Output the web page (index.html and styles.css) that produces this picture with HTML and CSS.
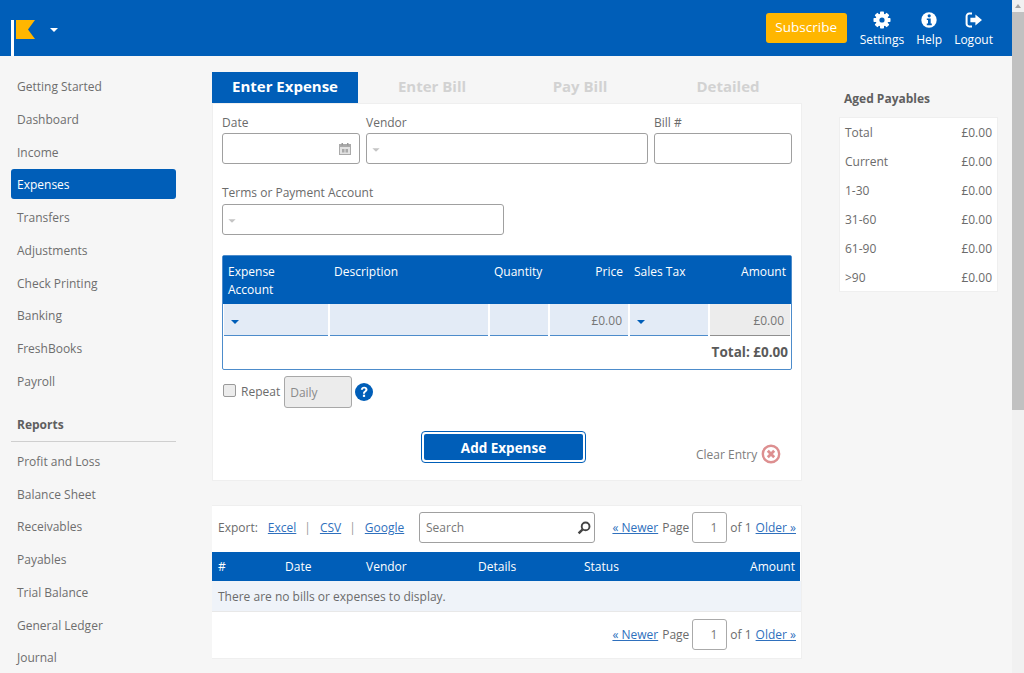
FILE: index.html
```html
<!DOCTYPE html>
<html lang="en">
<head>
<meta charset="utf-8">
<title>Expenses</title>
<link rel="stylesheet" href="styles.css">
</head>
<body>
<div class="shell">
  <div class="page">
    <header class="topbar">
      <div class="brand">
        <svg class="logo" width="26" height="36" viewBox="0 0 26 36"><rect x="0" y="0" width="3" height="36" fill="#fff"/><polygon points="5,0 24,0 17,9.5 24,19 5,19" fill="#ffb600"/></svg>
        <span class="caret caret-white"></span>
      </div>
      <div class="actions">
        <a class="subscribe">Subscribe</a>
        <nav class="topnav">
          <a class="topnav-item">
            <svg width="18" height="18" viewBox="0 0 18 18"><g fill="#fff"><rect x="7" y="0.5" width="4" height="17" rx="0.8"/><rect x="7" y="0.5" width="4" height="17" rx="0.8" transform="rotate(45 9 9)"/><rect x="7" y="0.5" width="4" height="17" rx="0.8" transform="rotate(90 9 9)"/><rect x="7" y="0.5" width="4" height="17" rx="0.8" transform="rotate(135 9 9)"/></g><circle cx="9" cy="9" r="5.2" fill="none" stroke="#fff" stroke-width="2.4"/><circle cx="9" cy="9" r="2.6" fill="#005eb8"/></svg>
            <span>Settings</span>
          </a>
          <a class="topnav-item">
            <svg width="18" height="18" viewBox="0 0 18 18"><circle cx="9" cy="9" r="7.7" fill="#fff"/><circle cx="9.2" cy="4.8" r="1.6" fill="#005eb8"/><path d="M6.8 7.4h3.9v5.2h1.1v1.7H6.8v-1.7h1.2V9.1H6.8z" fill="#005eb8"/></svg>
            <span>Help</span>
          </a>
          <a class="topnav-item">
            <svg width="18" height="18" viewBox="0 0 18 18"><path d="M7 2.6H4.2A2.6 2.6 0 0 0 1.6 5.2v7.6a2.6 2.6 0 0 0 2.6 2.6H7" fill="none" stroke="#fff" stroke-width="2"/><path d="M10.4 3.4 17 9l-6.6 5.6v-3.4H5.4V6.8h5z" fill="#fff"/></svg>
            <span>Logout</span>
          </a>
        </nav>
      </div>
    </header>

    <div class="layout">
      <aside class="sidebar">
        <a class="side-link">Getting Started</a>
        <a class="side-link">Dashboard</a>
        <a class="side-link">Income</a>
        <a class="side-link active">Expenses</a>
        <a class="side-link">Transfers</a>
        <a class="side-link">Adjustments</a>
        <a class="side-link">Check Printing</a>
        <a class="side-link">Banking</a>
        <a class="side-link">FreshBooks</a>
        <a class="side-link">Payroll</a>
        <h3 class="side-heading">Reports</h3>
        <a class="side-link">Profit and Loss</a>
        <a class="side-link">Balance Sheet</a>
        <a class="side-link">Receivables</a>
        <a class="side-link">Payables</a>
        <a class="side-link">Trial Balance</a>
        <a class="side-link">General Ledger</a>
        <a class="side-link">Journal</a>
      </aside>

      <main class="content">
        <div class="tabs">
          <a class="tab active">Enter Expense</a>
          <a class="tab">Enter Bill</a>
          <a class="tab">Pay Bill</a>
          <a class="tab">Detailed</a>
        </div>

        <section class="card form-card">
          <div class="field-row">
            <label class="field field-date">
              <span class="field-label">Date</span>
              <span class="input">
                <svg class="cal" width="12" height="12" viewBox="0 0 12 12"><rect x="0.5" y="1.5" width="11" height="10" fill="#e2e2e2" stroke="#aaa"/><rect x="0.5" y="1.5" width="11" height="2.5" fill="#aaa"/><rect x="2.5" y="0" width="1.5" height="2.5" fill="#999"/><rect x="8" y="0" width="1.5" height="2.5" fill="#999"/><rect x="3" y="6" width="2.5" height="3.5" fill="#aaa"/><rect x="6.5" y="6" width="2.5" height="3.5" fill="#aaa"/></svg>
              </span>
            </label>
            <label class="field field-vendor">
              <span class="field-label">Vendor</span>
              <span class="input input-select"><span class="caret caret-grey"></span></span>
            </label>
            <label class="field field-bill">
              <span class="field-label">Bill #</span>
              <span class="input"></span>
            </label>
          </div>

          <label class="field field-terms">
            <span class="field-label">Terms or Payment Account</span>
            <span class="input input-select"><span class="caret caret-grey"></span></span>
          </label>

          <div class="lines">
            <div class="lines-head">
              <div class="lh">Expense<br>Account</div>
              <div class="lh">Description</div>
              <div class="lh">Quantity</div>
              <div class="lh right lh-price">Price</div>
              <div class="lh">Sales Tax</div>
              <div class="lh right">Amount</div>
            </div>
            <div class="lines-row">
              <div class="lc"><span class="caret caret-blue"></span></div>
              <div class="lc"></div>
              <div class="lc"></div>
              <div class="lc right">£0.00</div>
              <div class="lc"><span class="caret caret-blue"></span></div>
              <div class="lc right readonly">£0.00</div>
            </div>
            <div class="lines-total">Total: £0.00</div>
          </div>

          <div class="repeat-row">
            <span class="check"></span>
            <span class="repeat-label">Repeat</span>
            <span class="input repeat-input">Daily</span>
            <svg class="help" width="18" height="18" viewBox="0 0 18 18"><circle cx="9" cy="9" r="9" fill="#005eb8"/><path d="M5.8 6.8C6 4.9 7.4 3.8 9.2 3.8c1.9 0 3.3 1.2 3.3 2.8 0 1.3-.7 2-1.7 2.6-.7.4-.9.7-.9 1.5H8c0-1.5.4-2.1 1.4-2.8.7-.4 1-.8 1-1.3 0-.6-.5-1-1.2-1-.8 0-1.2.5-1.3 1.2z" fill="#fff"/><rect x="7.9" y="11.7" width="2.2" height="2.2" fill="#fff"/></svg>
          </div>

          <div class="submit-row">
            <button class="add-btn" type="button"><span>Add Expense</span></button>
            <a class="clear">
              <span>Clear Entry</span>
              <svg width="20" height="20" viewBox="0 0 20 20"><circle cx="10" cy="10" r="8.2" fill="#fff" stroke="#dd8f90" stroke-width="2.4"/><path d="M6.8 6.8l6.4 6.4M13.2 6.8l-6.4 6.4" stroke="#dd8f90" stroke-width="2.8"/></svg>
            </a>
          </div>
        </section>

        <section class="card list-card">
          <div class="toolbar">
            <div class="export">
              <span class="export-label">Export:</span>
              <a class="link">Excel</a><span class="sep">|</span>
              <a class="link">CSV</a><span class="sep">|</span>
              <a class="link">Google</a>
            </div>
            <div class="input search">
              <span>Search</span>
              <svg width="14" height="14" viewBox="0 0 14 14"><circle cx="8.6" cy="5.4" r="3.9" fill="none" stroke="#444" stroke-width="1.9"/><path d="M5.7 8.3 1.6 12.4" stroke="#444" stroke-width="2.4"/></svg>
            </div>
            <div class="pager">
              <a class="link">« Newer</a><span>Page</span><span class="input page-input">1</span><span>of 1</span><a class="link">Older »</a>
            </div>
          </div>
          <div class="list-head">
            <span>#</span><span>Date</span><span>Vendor</span><span>Details</span><span>Status</span><span class="right">Amount</span>
          </div>
          <div class="list-empty">There are no bills or expenses to display.</div>
          <div class="list-foot">
            <div class="pager">
              <a class="link">« Newer</a><span>Page</span><span class="input page-input">1</span><span>of 1</span><a class="link">Older »</a>
            </div>
          </div>
        </section>
      </main>

      <aside class="aged">
        <h3 class="aged-title">Aged Payables</h3>
        <div class="aged-card">
          <div class="aged-row"><span>Total</span><span>£0.00</span></div>
          <div class="aged-row"><span>Current</span><span>£0.00</span></div>
          <div class="aged-row"><span>1-30</span><span>£0.00</span></div>
          <div class="aged-row"><span>31-60</span><span>£0.00</span></div>
          <div class="aged-row"><span>61-90</span><span>£0.00</span></div>
          <div class="aged-row"><span>&gt;90</span><span>£0.00</span></div>
        </div>
      </aside>
    </div>
  </div>

  <div class="scrollbar">
    <div class="scroll-arrow"></div>
    <div class="scroll-thumb"></div>
  </div>
</div>
</body>
</html>
```
FILE: styles.css
```css
* { box-sizing: border-box; }
html, body { margin: 0; height: 100%; overflow: hidden; }
body {
  font-family: "Open Sans", "Liberation Sans", sans-serif;
  font-size: 12px;
  color: #6b6b6b;
  background: #f6f6f6;
}
.shell { display: flex; height: 673px; }
.page { flex: 1; min-width: 0; height: 673px; overflow: hidden; }

.topbar {
  height: 56px;
  background: #005eb8;
  display: flex;
  justify-content: space-between;
  align-items: flex-start;
  padding: 0 19px 0 11px;
}
.brand { display: flex; align-items: flex-start; padding-top: 20px; }
.logo { display: block; }
.brand .caret { margin: 8px 0 0 13px; }
.caret {
  display: inline-block;
  width: 0; height: 0;
  border-left: 4px solid transparent;
  border-right: 4px solid transparent;
  border-top: 4px solid #fff;
}
.caret-grey { border-top-color: #c4c4c4; }
.caret-blue { border-top-color: #005eb8; }
.actions { display: flex; align-items: flex-start; }
.subscribe {
  margin-top: 13px;
  width: 81px;
  height: 30px;
  background: #ffb600;
  border-radius: 3px;
  color: #fff;
  font-size: 13.5px;
  line-height: 28px;
  text-align: center;
}
.topnav { display: flex; gap: 12px; margin-left: 13px; padding-top: 11px; }
.topnav-item {
  display: flex;
  flex-direction: column;
  align-items: center;
  gap: 1px;
  color: #fff;
  font-size: 12px;
  line-height: 19px;
}
.topnav-item svg { display: block; }

.layout { display: flex; padding-top: 16px; align-items: flex-start; }
.sidebar { width: 165px; margin: -1px 0 0 11px; flex: none; }
.side-link {
  display: block;
  height: 30px;
  margin-bottom: 2.75px;
  padding: 1px 0 0 6px;
  line-height: 29px;
  border-radius: 3px;
  color: #6e6e6e;
}
.side-link.active { background: #005eb8; color: #fff; }
.side-heading {
  margin: 12.5px 0 4px;
  height: 33.5px;
  padding: 2px 0 0 6px;
  font-size: 12px;
  font-weight: 700;
  line-height: 30px;
  color: #5f5f5f;
  border-bottom: 1px solid #cfcfcf;
}

.content { width: 590px; margin-left: 36px; flex: none; }
.tabs { display: grid; grid-template-columns: 146px 148px 148px 148px; height: 31px; }
.tab {
  text-align: center;
  font-size: 15px;
  font-weight: 700;
  line-height: 29px;
  color: #d2d2d2;
}
.tab.active { background: #005eb8; color: #fff; }

.card { background: #fff; border: 1px solid #efefef; }
.form-card { height: 378px; padding: 8px 9px 0 9px; }
.field-row { display: flex; gap: 6px; }
.field { display: block; }
.field-date { width: 138px; }
.field-vendor { width: 282px; }
.field-bill { width: 138px; }
.field-terms { width: 282px; margin-top: 18px; }
.field-label { display: block; height: 21px; line-height: 21px; font-size: 12px; }
.field-terms .field-label { height: 22px; }
.input {
  display: flex;
  align-items: center;
  height: 31px;
  background: #fff;
  border: 1px solid #a0a0a0;
  border-radius: 3px;
}
.field-date .input { justify-content: flex-end; padding-right: 8px; }
.input-select { padding-left: 5px; }
.input .caret { transform: scale(0.9); margin-top: 3px; }

.lines {
  margin-top: 20px;
  width: 570px;
  height: 115px;
  border: 1px solid #4d8ccb;
  border-radius: 2px;
}
.lines-head, .lines-row {
  display: grid;
  grid-template-columns: 106px 160px 60px 80px 80px 82px;
}
.lines-head { height: 48px; background: #005eb8; color: #fff; }
.lh { padding: 7px 5px 0; line-height: 18px; }
.lh-price { padding-right: 6px; }
.right { text-align: right; }
.lines-row { height: 32px; }
.lc {
  margin: 0 1px;
  height: 32px;
  background: #e3ebf6;
  border-bottom: 1px solid #4d8ccb;
  line-height: 33px;
  padding: 0 5px;
  color: #777;
}
.lc .caret { margin-left: 2px; vertical-align: middle; }
.lc.readonly { background: #ececec; border-bottom-color: #8f8f8f; }
.lc.right { padding-right: 6px; }
.lines-total {
  height: 33px;
  line-height: 33px;
  text-align: right;
  padding-right: 3px;
  font-weight: 700;
  font-size: 13.5px;
  color: #5a5a5a;
}

.repeat-row { display: flex; align-items: center; height: 32px; margin-top: 6px; }
.check {
  width: 13px; height: 13px;
  margin: -4px 5px 0 1px;
  background: #ececec;
  border: 1px solid #9a9a9a;
  border-radius: 2px;
}
.repeat-label { margin-top: -2px; }
.repeat-input {
  width: 68px;
  height: 32px;
  margin-left: 4px;
  padding-left: 5px;
  background: #ececec;
  color: #8a8a8a;
  border-color: #a8a8a8;
}
.help { margin: 0 0 0 3px; }

.submit-row { display: flex; align-items: flex-start; margin-top: 23px; }
.add-btn {
  margin-left: 199px;
  width: 165px;
  height: 32px;
  padding: 2px;
  background: #fff;
  border: 1px solid #005eb8;
  border-radius: 4px;
  font: inherit;
  cursor: pointer;
}
.add-btn span {
  display: block;
  height: 26px;
  background: #005eb8;
  border-radius: 2px;
  color: #fff;
  font-size: 13.5px;
  font-weight: 700;
  line-height: 28px;
}
.clear { display: flex; align-items: center; gap: 4px; margin: 13px 0 0 110px; color: #7d7d7d; }

.list-card { margin-top: 24px; height: 154px; border-left: 0; }
.toolbar { display: flex; align-items: center; height: 46px; padding: 0 5px 3px 6px; }
.export { width: 201px; display: flex; align-items: center; flex: none; }
.export-label { margin-right: 10px; }
.sep { margin: 0 9px 0 8px; color: #999; }
.link { color: #2f70bd; text-decoration: underline; }
.input.search {
  width: 176px;
  height: 31px;
  padding: 0 3px 0 6px;
  justify-content: space-between;
  color: #777;
  flex: none;
}
.pager { display: flex; align-items: center; gap: 4px; margin-left: auto; white-space: nowrap; }
.page-input {
  width: 35px;
  height: 31px;
  margin: 0 -1px;
  justify-content: flex-end;
  padding-right: 9px;
  color: #777;
  border-color: #aaa;
}
.list-head {
  display: grid;
  grid-template-columns: 67px 81px 112px 106px 1fr auto;
  height: 29px;
  align-items: center;
  margin-right: 1px;
  padding: 0 5px 0 6px;
  background: #005eb8;
  color: #fff;
}
.list-empty {
  height: 31px;
  padding-left: 6px;
  line-height: 32px;
  background: #eff3f9;
  border-bottom: 1px solid #e8e8e8;
}
.list-foot { display: flex; padding: 7px 5px 0 6px; }

.aged { width: 159px; margin-left: 37px; flex: none; }
.aged-title {
  margin: 0 0 0 5px;
  height: 45px;
  padding-top: 18px;
  font-size: 12px;
  font-weight: 700;
  line-height: 18px;
  color: #5f5f5f;
}
.aged-card { background: #fff; border: 1px solid #efefef; padding: 0 5px; height: 175px; }
.aged-row { display: flex; justify-content: space-between; height: 29px; line-height: 29px; }

.scrollbar { width: 12px; flex: none; background: #f1f1f1; display: flex; flex-direction: column; }
.scroll-arrow { height: 12px; position: relative; }
.scroll-arrow::after {
  content: "";
  position: absolute;
  left: 3px; top: 4px;
  border-left: 3px solid transparent;
  border-right: 3px solid transparent;
  border-bottom: 4px solid #a3a3a3;
}
.scroll-thumb { height: 398px; background: #c1c1c1; }
```
